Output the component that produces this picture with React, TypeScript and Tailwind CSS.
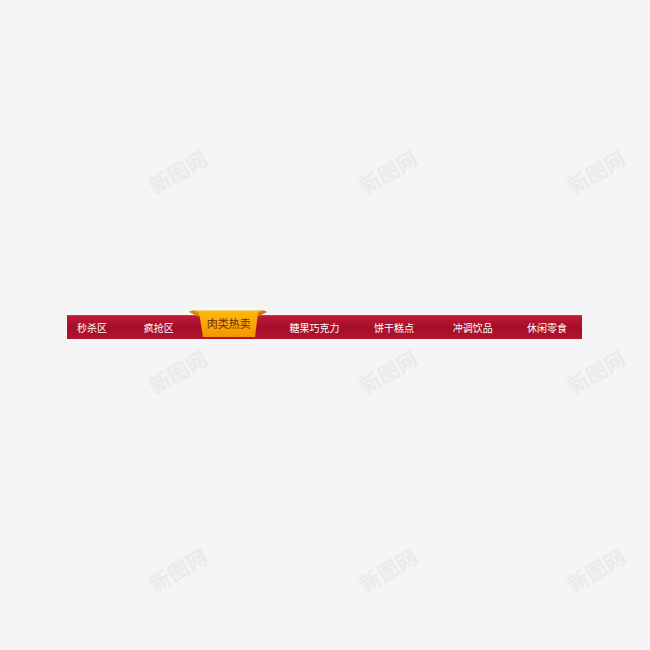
import React from "react";

const marks = [
  [178, 172], [388, 172], [596, 172],
  [178, 372], [388, 372], [596, 372],
  [178, 570], [388, 570], [596, 570],
];

function Item({ label, className }: { label: string; className: string }) {
  return (
    <div className={`flex items-center justify-center h-full text-[10px] leading-none text-white whitespace-nowrap ${className}`}>
      {label}
    </div>
  );
}

export default function App() {
  return (
    <div
      className="relative w-[650px] h-[650px] bg-[#f5f5f5] overflow-hidden pt-[315px] pl-[67px]"
      style={{ fontFamily: '"Noto Sans CJK SC", "Noto Sans", sans-serif' }}
    >
      {marks.map(([x, y], i) => (
        <div
          key={i}
          className="absolute text-[21px] font-bold text-[#ebebeb] leading-none whitespace-nowrap select-none"
          style={{ left: x, top: y, transform: "translate(-50%,-50%) rotate(-30deg)" }}
        >
          新图网
        </div>
      ))}
      <div className="relative flex w-[515px] h-[24px] bg-[linear-gradient(to_bottom,#c01a38_0%,#a40e28_50%,#b31430_100%)] border-t border-[#cc3550]">
        <Item label="秒杀区" className="w-[50px]" />
        <Item label="疯抢区" className="w-[70px] ml-[7px]" />
        <div className="relative w-[70px] h-full">
          <svg
            className="absolute left-[-6px] top-[-6px]"
            width="80"
            height="28"
            viewBox="0 0 80 28"
          >
            <defs>
              <linearGradient id="tabg" x1="0" y1="0" x2="0" y2="1">
                <stop offset="0" stopColor="#ffb80f" />
                <stop offset="1" stopColor="#f59600" />
              </linearGradient>
            </defs>
            <path d="M1,2 Q2,0.5 5,0.5 L11,1 L11,7 Z" fill="#d98a08" />
            <path d="M79,2 Q78,0.5 75,0.5 L69,1 L69,7 Z" fill="#d66f0c" />
            <path d="M5,0.5 L75,0.5 Q72,1 70,2.5 L67,27 L15,27 L11,2.5 Q8,1 5,0.5 Z" fill="url(#tabg)" />
          </svg>
          <div className="relative flex items-center justify-center h-full -mt-[4px] text-[11px] leading-none text-[#6e2a00] whitespace-nowrap">
            肉类热卖
          </div>
        </div>
        <Item label="糖果巧克力" className="w-[80px] ml-[11px]" />
        <Item label="饼干糕点" className="w-[79px]" />
        <Item label="冲调饮品" className="w-[79px]" />
        <Item label="休闲零食" className="w-[70px]" />
      </div>
    </div>
  );
}
